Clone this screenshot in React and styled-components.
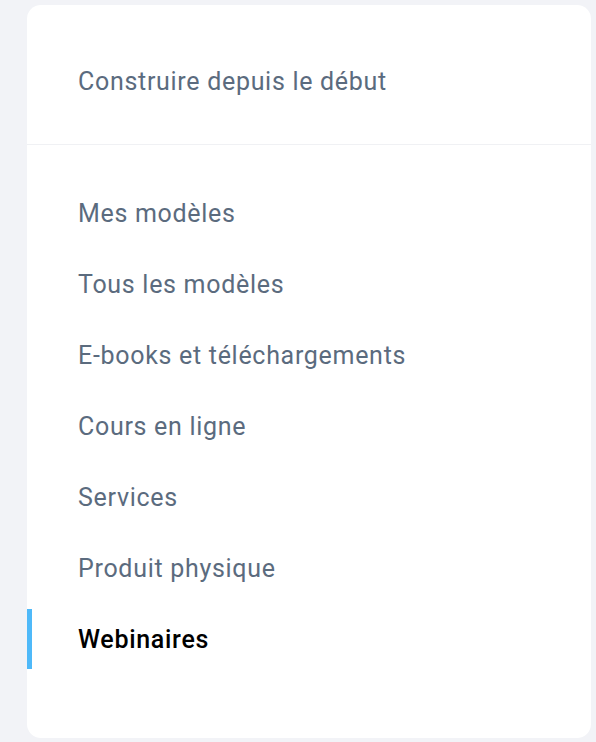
import React from "react";
import styled, { createGlobalStyle } from "styled-components";

const GlobalStyle = createGlobalStyle`
  html, body {
    margin: 0;
    padding: 0;
    background: #f2f3f7;
    font-family: Roboto, "Noto Sans", sans-serif;
  }
`;

const Page = styled.div`
  padding: 5px 5px 4px 27px;
`;

const Card = styled.nav`
  background: #ffffff;
  border-radius: 14px;
  height: 733px;
  box-sizing: border-box;
  overflow: hidden;
`;

const Header = styled.div`
  height: 140px;
  box-sizing: border-box;
  display: flex;
  align-items: center;
  padding: 13px 0 0 51px;
  border-bottom: 1px solid #f0f1f4;
`;

const List = styled.ul`
  list-style: none;
  margin: 0;
  padding: 38px 0 0;
  display: flex;
  flex-direction: column;
  gap: 11px;
`;

const Item = styled.li`
  position: relative;
  height: 60px;
  display: flex;
  align-items: center;
  padding-left: 51px;
  font-size: 25px;
  letter-spacing: 0.7px;
  color: ${(p) => (p.$active ? "#000000" : "#5b6b7e")};
  font-weight: ${(p) => (p.$active ? 500 : 400)};

  &::before {
    content: "";
    display: ${(p) => (p.$active ? "block" : "none")};
    position: absolute;
    left: 0;
    top: 0;
    width: 5px;
    height: 100%;
    background: #4fb9f9;
  }
`;

const HeaderLink = styled.span`
  font-size: 25px;
  letter-spacing: 0.7px;
  color: #5b6b7e;
`;

const items = [
  "Mes modèles",
  "Tous les modèles",
  "E-books et téléchargements",
  "Cours en ligne",
  "Services",
  "Produit physique",
  "Webinaires",
];

export default function App() {
  return (
    <>
      <GlobalStyle />
      <Page>
        <Card>
          <Header>
            <HeaderLink>Construire depuis le début</HeaderLink>
          </Header>
          <List>
            {items.map((text) => (
              <Item key={text} $active={text === "Webinaires"}>
                {text}
              </Item>
            ))}
          </List>
        </Card>
      </Page>
    </>
  );
}
